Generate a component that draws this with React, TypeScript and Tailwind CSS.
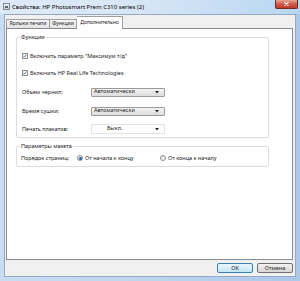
import React from "react";

const font = { fontFamily: '"Noto Sans", "Liberation Sans", sans-serif' };

function Check() {
  return (
    <div className="w-[6px] h-[6px] border border-[#8e8f8f] bg-gradient-to-br from-[#e6e6e6] to-[#ffffff] flex items-center justify-center shrink-0">
      <svg width="6" height="6" viewBox="0 0 6 6" className="block">
        <path d="M0.8 3.2 L2.3 4.7 L5.2 0.9" stroke="#3b5998" strokeWidth="1.1" fill="none" />
      </svg>
    </div>
  );
}

function Select({ text, white }: { text: string; white?: boolean }) {
  return (
    <div
      className={
        "w-[74px] flex items-center justify-between rounded-[1px] border " +
        (white
          ? "h-[10px] bg-white border-[#e2e2e2] pl-[15px] pr-[5px]"
          : "h-[9px] bg-gradient-to-b from-[#f4f4f4] to-[#dcdcdc] border-[#9b9b9b] pl-[2px] pr-[5px]")
      }
    >
      <span className="leading-none text-[#222]">{text}</span>
      <svg width="4" height="3" viewBox="0 0 4 3" className="block">
        <path d="M0 0 H4 L2 2.5 Z" fill="#222" />
      </svg>
    </div>
  );
}

function Radio({ on }: { on?: boolean }) {
  return (
    <div className="w-[6px] h-[6px] rounded-full border border-[#8e8f8f] bg-gradient-to-br from-[#e4e4e4] to-white flex items-center justify-center shrink-0">
      {on && <div className="w-[3px] h-[3px] rounded-full bg-[#1f5fa8]" />}
    </div>
  );
}

export default function App() {
  return (
    <div
      className="w-[300px] h-[281px] flex flex-col bg-gradient-to-r from-[#c9dcf1] via-[#bed5ee] to-[#abc8ea] text-[5.5px] text-[#1a1a1a] overflow-hidden"
      style={font}
    >
      {/* title bar */}
      <div className="h-[14px] flex items-start shrink-0 bg-gradient-to-r from-[#dfeaf7] via-[#d6e5f5] to-[#b8d6f3]">
        <div className="ml-[3px] mt-[3px] w-[7px] h-[7px] border border-[#7a8a9a] bg-gradient-to-b from-[#f5f5f5] to-[#c8ccd2] flex items-center justify-center">
          <div className="w-[3px] h-[2px] bg-[#5a6a7a]" />
        </div>
        <div className="ml-[2px] mt-[3px] text-[6px] leading-[8px] text-black whitespace-nowrap">
          Свойства: HP Photosmart Prem C310 series (2)
        </div>
        <div className="ml-auto mr-[2px] w-[23px] h-[9px] rounded-b-[2px] border border-t-0 border-[#6b2a22] bg-gradient-to-b from-[#e8a493] via-[#cf5c48] to-[#c0392b] flex items-center justify-center">
          <svg width="5" height="4" viewBox="0 0 5 4" className="block">
            <path d="M0.5 0.3 L4.5 3.7 M4.5 0.3 L0.5 3.7" stroke="#fff" strokeWidth="1.1" />
          </svg>
        </div>
      </div>

      {/* client */}
      <div className="mx-[4px] mb-[4px] flex-1 bg-[#f0f0f0] border border-[#95a9c2] flex flex-col">
        {/* tabs */}
        <div className="h-[13px] flex items-end pl-[1px] text-[5px]">
          <div className="h-[9px] border border-b-0 border-[#a0a0a0] bg-gradient-to-b from-[#f4f4f4] to-[#e3e3e3] flex items-center justify-center whitespace-nowrap w-[44px]">
            Ярлыки печати
          </div>
          <div className="h-[9px] border border-b-0 border-l-0 border-[#a0a0a0] bg-gradient-to-b from-[#f4f4f4] to-[#e3e3e3] flex items-center justify-center whitespace-nowrap w-[27px]">
            Функции
          </div>
          <div className="relative h-[13px] -mb-px z-10 border border-b-0 border-l-0 border-[#a0a0a0] bg-white flex items-center justify-center whitespace-nowrap w-[46px]">
            Дополнительно
          </div>
        </div>

        {/* panel */}
        <div className="ml-[1px] mr-[2px] h-[232px] bg-white border border-[#898c95] pt-[8px] pl-[9px]">
          {/* group 1 */}
          <div className="relative w-[253px] h-[101px] border border-[#dcdcdc] rounded-[2px] pl-[5px]">
            <div className="absolute -top-[4px] left-[3px] bg-white px-[1px] leading-[7px]">Функции</div>
            <div className="mt-[13px] h-[10px] flex items-center gap-[1px]">
              <Check />
              <span className="ml-[1px]">Включить параметр "Максимум т/д"</span>
            </div>
            <div className="mt-[7px] h-[10px] flex items-center gap-[1px]">
              <Check />
              <span className="ml-[1px]">Включить HP Real Life Technologies</span>
            </div>
            <div className="mt-[9px] h-[10px] flex items-center">
              <span className="w-[69px]">Объем чернил:</span>
              <Select text="Автоматически" />
            </div>
            <div className="mt-[9px] h-[10px] flex items-center">
              <span className="w-[69px]">Время сушки:</span>
              <Select text="Автоматически" />
            </div>
            <div className="mt-[8px] h-[10px] flex items-center">
              <span className="w-[69px]">Печать плакатов:</span>
              <Select text="Выкл." white />
            </div>
          </div>

          {/* group 2 */}
          <div className="relative mt-[8px] w-[253px] h-[21px] border border-[#dcdcdc] rounded-[2px] pl-[4px]">
            <div className="absolute -top-[4px] left-[3px] bg-white px-[1px] leading-[7px]">Параметры макета</div>
            <div className="mt-[6px] h-[10px] flex items-center">
              <span className="w-[56px]">Порядок страниц:</span>
              <Radio on />
              <span className="ml-[2px] w-[75px]">От начала к концу</span>
              <Radio />
              <span className="ml-[2px]">От конца к началу</span>
            </div>
          </div>
        </div>

        {/* buttons */}
        <div className="flex justify-end gap-[4px] mt-[3px] pr-[2px]">
          <div className="w-[36px] h-[10px] rounded-[2px] border border-[#3c7fb1] bg-gradient-to-b from-[#eaf6fd] to-[#c4e5f6] flex items-center justify-center">
            OK
          </div>
          <div className="w-[36px] h-[10px] rounded-[2px] border border-[#707070] bg-gradient-to-b from-[#f2f2f2] to-[#d6d6d6] flex items-center justify-center">
            Отмена
          </div>
        </div>
      </div>
    </div>
  );
}
